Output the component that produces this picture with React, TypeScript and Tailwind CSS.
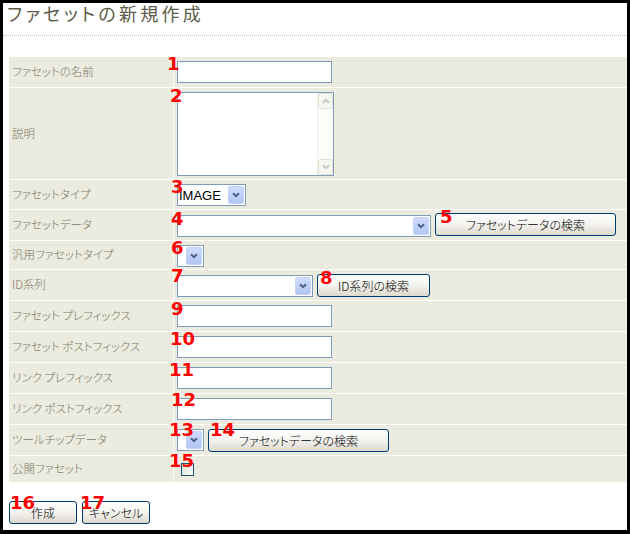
import React from 'react';

const jp = "font-['Noto_Sans_CJK_JP',sans-serif] [font-feature-settings:'palt']";

function Chevron({ color = '#4d6185' }: { color?: string }) {
  return (
    <svg width="8" height="6" viewBox="0 0 8 6" aria-hidden="true">
      <path d="M1 1.2 L4 4.2 L7 1.2" fill="none" stroke={color} strokeWidth="2" />
    </svg>
  );
}

function TextInput() {
  return <div className="h-[22px] w-[155px] border border-[#7f9db9] bg-white" />;
}

function Combo({ width, text }: { width: string; text?: string }) {
  return (
    <div className={`flex h-[22px] ${width} items-center border border-[#7f9db9] bg-white`}>
      <span className="flex-1 pl-[1px] font-['Liberation_Sans',sans-serif] text-[13px] leading-none text-black">
        {text}
      </span>
      <span className="mr-[1px] flex h-[18px] w-[16px] items-center justify-center rounded-[2px] border border-[#c3d3fd] bg-gradient-to-b from-[#cfdcfc] to-[#b2c6f3]">
        <Chevron />
      </span>
    </div>
  );
}

function XpButton({ width, children, extra = '' }: { width: string; children: React.ReactNode; extra?: string }) {
  return (
    <button
      className={`flex h-[23px] ${width} ${extra} items-center justify-center rounded-[3px] border border-[#003c74] bg-gradient-to-b from-white via-[#f3f3ef] to-[#dcd8cc] text-[12px] font-light leading-none text-black ${jp}`}
    >
      {children}
    </button>
  );
}

function ScrollBtn({ up }: { up?: boolean }) {
  return (
    <span className="flex h-[16px] w-[15px] items-center justify-center rounded-[2px] border border-[#e2e2d9] bg-[#f7f7f2]">
      <span className={up ? 'rotate-180' : ''}>
        <Chevron color="#c8c8bf" />
      </span>
    </span>
  );
}

function TextArea() {
  return (
    <div className="flex h-[84px] w-[157px] border border-[#7f9db9] bg-white">
      <div className="flex-1" />
      <div className="flex w-[16px] flex-col justify-between border-l border-[#efefe8] bg-[#fcfcf8]">
        <ScrollBtn up />
        <ScrollBtn />
      </div>
    </div>
  );
}

const rows: { label: string; h: string; field: React.ReactNode }[] = [
  { label: 'ファセットの名前', h: 'h-[30px]', field: <TextInput /> },
  { label: '説明', h: 'h-[91px]', field: <TextArea /> },
  { label: 'ファセットタイプ', h: 'h-[29px]', field: <Combo width="w-[69px]" text="IMAGE" /> },
  {
    label: 'ファセットデータ',
    h: 'h-[30px]',
    field: (
      <div className="flex items-start gap-[4px]">
        <div className="mt-[1px]">
          <Combo width="w-[254px]" />
        </div>
        <XpButton width="w-[181px]" extra="-mt-[1px]">ファセットデータの検索</XpButton>
      </div>
    ),
  },
  { label: '汎用ファセットタイプ', h: 'h-[28px]', field: <Combo width="w-[27px]" /> },
  {
    label: 'ID系列',
    h: 'h-[30px]',
    field: (
      <div className="flex items-start gap-[4px]">
        <div className="mt-[1px]">
          <Combo width="w-[136px]" />
        </div>
        <XpButton width="w-[113px]">ID系列の検索</XpButton>
      </div>
    ),
  },
  { label: 'ファセット プレフィックス', h: 'h-[30px]', field: <TextInput /> },
  { label: 'ファセット ポストフィックス', h: 'h-[30px]', field: <TextInput /> },
  { label: 'リンク プレフィックス', h: 'h-[30px]', field: <TextInput /> },
  { label: 'リンク ポストフィックス', h: 'h-[30px]', field: <TextInput /> },
  {
    label: 'ツールチップデータ',
    h: 'h-[30px]',
    field: (
      <div className="flex items-start gap-[4px]">
        <Combo width="w-[27px]" />
        <XpButton width="w-[181px]">ファセットデータの検索</XpButton>
      </div>
    ),
  },
  {
    label: '公開ファセット',
    h: 'h-[26px]',
    field: (
      <div className="ml-[4px] mt-[3px] h-[13px] w-[13px] border border-[#1c5180] bg-gradient-to-br from-[#dcdcd7] to-white" />
    ),
  },
];

const marks: { n: string; pos: string }[] = [
  { n: '1', pos: 'left-[164px] top-[52px]' },
  { n: '2', pos: 'left-[167px] top-[84px]' },
  { n: '3', pos: 'left-[168px] top-[175px]' },
  { n: '4', pos: 'left-[168px] top-[207px]' },
  { n: '5', pos: 'left-[437px] top-[205px]' },
  { n: '6', pos: 'left-[168px] top-[236px]' },
  { n: '7', pos: 'left-[168px] top-[264px]' },
  { n: '8', pos: 'left-[317px] top-[266px]' },
  { n: '9', pos: 'left-[168px] top-[297px]' },
  { n: '10', pos: 'left-[167px] top-[327px]' },
  { n: '11', pos: 'left-[166px] top-[358px]' },
  { n: '12', pos: 'left-[168px] top-[388px]' },
  { n: '13', pos: 'left-[166px] top-[418px]' },
  { n: '14', pos: 'left-[207px] top-[418px]' },
  { n: '15', pos: 'left-[166px] top-[449px]' },
  { n: '16', pos: 'left-[7px] top-[491px]' },
  { n: '17', pos: 'left-[77px] top-[491px]' },
];

export default function App() {
  return (
    <div className="h-[534px] w-[630px] bg-black pb-[4px] pl-[3px] pr-[3px] pt-[3px]">
      <div className={`relative h-full w-full bg-white ${jp}`}>
        <h1 className="pl-[4px] text-[18px] font-normal leading-[20px] tracking-[3.3px] text-[#5c5c48]">
          ファセットの新規作成
        </h1>
        <div className="mt-[12px] border-t border-dotted border-[#c4c4c4]" />

        <div className="ml-[6px] mt-[21px] grid w-[618px] grid-cols-[164px_453px] gap-px bg-white">
          {rows.map((r) => (
            <React.Fragment key={r.label}>
              <div className={`flex ${r.h} items-center bg-[#ebebdf] pl-[3px] text-[11.5px] font-light text-[#7a7a66]`}>
                {r.label}
              </div>
              <div className={`${r.h} bg-[#ebebdf] pl-[3px] pt-[4px]`}>{r.field}</div>
            </React.Fragment>
          ))}
        </div>

        <div className="ml-[6px] mt-[19px] flex gap-[5px]">
          <XpButton width="w-[68px]">作成</XpButton>
          <XpButton width="w-[68px]">キャンセル</XpButton>
        </div>

        {marks.map((m) => (
          <span
            key={m.n}
            className={`absolute ${m.pos} font-['DejaVu_Sans',sans-serif] text-[18px] font-bold leading-none text-[#ff0000]`}
          >
            {m.n}
          </span>
        ))}
      </div>
    </div>
  );
}
